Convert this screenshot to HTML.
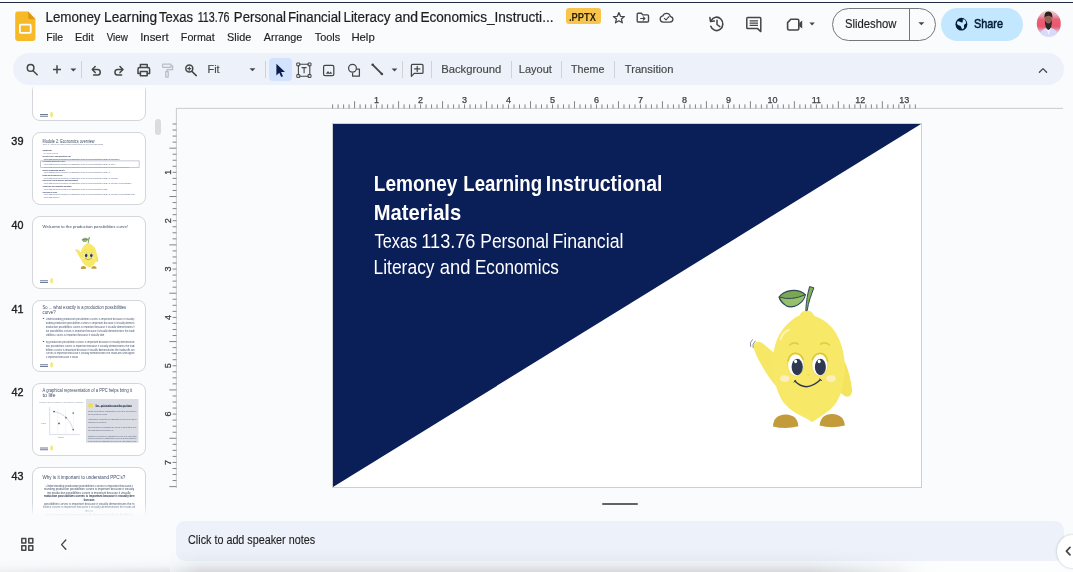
<!DOCTYPE html>
<html>
<head>
<meta charset="utf-8">
<title>Lemoney Learning - Google Slides</title>
<style>
*{box-sizing:border-box;margin:0;padding:0}
html,body{width:1073px;height:572px;overflow:hidden}
body{background:#f9fbfd;font-family:"Liberation Sans",sans-serif;color:#1f1f1f;position:relative}
.abs{position:absolute}
#wrap{position:absolute;left:-12px;top:-12px;width:1097px;height:596px;background:#f9fbfd;filter:blur(0.5px)}
#wrap>*{margin-left:12px;margin-top:12px}
#topline{left:0;top:0;width:1073px;height:3px;background:linear-gradient(to bottom,#fdfdfe 0,#fdfdfe 1.5px,#1d2a40 1.7px,#1d2a40 2.8px,#9db4c9 3px)}
#toolbar{left:13px;top:53.3px;width:1051px;height:32px;border-radius:16px;background:#edf2fa}
.sep{position:absolute;top:61px;width:1px;height:17px;background:#cfd2d7}
#selbtn{left:269px;top:58px;width:23px;height:23px;border-radius:4px;background:#d3e3fd}
#pptx{left:565.6px;top:8.3px;width:35.2px;height:16.2px;border-radius:3px;background:#f8c44c}
#slideshow{left:832px;top:8px;width:104px;height:33px;border:1px solid #747775;border-radius:17px}
#slideshow i{position:absolute;left:76px;top:0;width:1px;height:31px;background:#747775}
#share{left:941px;top:8px;width:81.5px;height:33px;border-radius:17px;background:#c2e7ff}

.thumb{position:absolute;left:32.4px;width:113.4px;height:72.6px;border:1px solid #d3d6da;border-radius:8px;background:#fff;overflow:hidden}
.ti{position:absolute;left:-1px;top:-1px;width:453.6px;height:290.4px;transform:scale(.25);transform-origin:0 0}
.tl{position:absolute;white-space:nowrap;overflow:hidden;line-height:1.15}
.lg{position:absolute;width:60px;height:22px}
.lg b{position:absolute;left:0;top:2px;width:32px;height:4px;background:#6f7c99;display:block}
.lg i{position:absolute;left:41px;top:-7px;width:11px;height:22px;border-radius:50%;background:#f3e873;display:block}

#filmclip{left:0;top:86.5px;width:165px;height:429px;overflow:hidden}
#filmfadeT{left:0;top:86px;width:165px;height:5px;background:linear-gradient(to bottom,rgba(249,251,253,1),rgba(249,251,253,0))}
#filmfade{left:0;top:503px;width:165px;height:13px;background:linear-gradient(to bottom,rgba(249,251,253,0),rgba(249,251,253,1))}
#scrollthumb{left:154.5px;top:119px;width:6px;height:15.5px;border-radius:3px;background:#dadce0}
#slide{left:332px;top:123px;width:590px;height:365px;background:#fff;border:1px solid #cdd0d3;overflow:hidden}
#notes{left:176px;top:520.8px;width:888px;height:40.2px;border-radius:9px;background:#edf2fa}
#handle{left:602px;top:503px;width:36px;height:1.6px;background:#5f6368;border-radius:1px}
#botshade{left:170px;top:550px;width:760px;height:22px;background:linear-gradient(to bottom,rgba(90,95,105,0) 0%,rgba(90,95,105,0.035) 40%,rgba(90,95,105,0.10) 70%,rgba(90,95,105,0.22) 100%);-webkit-mask-image:linear-gradient(to right,rgba(0,0,0,.35) 0,#000 4%,#000 84%,transparent 100%);mask-image:linear-gradient(to right,rgba(0,0,0,.35) 0,#000 4%,#000 84%,transparent 100%)}
#botshadeL{left:0;top:558px;width:170px;height:14px;background:linear-gradient(to right,rgba(249,251,253,.55) 0,rgba(249,251,253,0) 100%),linear-gradient(to bottom,rgba(90,95,105,0) 0%,rgba(90,95,105,0.04) 55%,rgba(90,95,105,0.16) 100%)}
#botwhite{left:900px;top:561px;width:173px;height:11px;background:linear-gradient(to right,rgba(252,253,254,0),rgba(252,253,254,1) 25%)}
#sidebtn{left:1057px;top:534.6px;width:30px;height:33px;border-radius:50%;background:#fff;box-shadow:0 0 2.5px rgba(0,0,0,.26)}
svg text{font-family:"Liberation Sans",sans-serif}
</style>
</head>
<body>
<div id="wrap">
<div id="topline" class="abs"></div>
<div id="toolbar" class="abs"></div>
<div id="selbtn" class="abs"></div>
<div class="sep" style="left:81px"></div>
<div class="sep" style="left:265px"></div>
<div class="sep" style="left:402px"></div>
<div class="sep" style="left:431px"></div>
<div class="sep" style="left:511px"></div>
<div class="sep" style="left:560.5px"></div>
<div class="sep" style="left:614px"></div>
<div id="pptx" class="abs"></div>
<div id="slideshow" class="abs"><i></i></div>
<div id="share" class="abs"></div>

<!-- filmstrip -->
<div id="filmclip" class="abs">
<div class="thumb" style="top:-37.9px;"><div class="ti"><div class="lg" style="left:32.0px;top:257.6px"><b></b><b style="top:9px"></b><i></i></div></div></div>
<div class="thumb" style="top:45.8px;"><div class="ti"><div class="tl" style="left:42.0px;top:25.9px;overflow:visible;transform-origin:0 0;transform:scaleX(0.840);font-size:18.0px;color:#3d4b66;">Module 2: Economics overview</div><div class="tl" style="left:42.0px;top:45.9px;width:242.4px;font-size:8.0px;color:#6b7890;">Topic 1: How do we make choices about how we use our resources? An overview of the production possibilities</div><div class="tl" style="left:42.0px;top:68.0px;overflow:visible;transform-origin:0 0;transform:scaleX(0.913);font-size:9.2px;color:#1d2a4a;font-weight:700;">Contents</div><div class="tl" style="left:45.6px;top:79.5px;overflow:visible;transform-origin:0 0;transform:scaleX(0.489);font-size:8.8px;color:#5a6a8e;">Unit 1: Welcome to economics</div><div class="tl" style="left:42.0px;top:90.4px;overflow:visible;transform-origin:0 0;transform:scaleX(0.682);font-size:9.2px;color:#1d2a4a;font-weight:700;">Scarcity, choice, and opportunity cost</div><div class="tl" style="left:45.6px;top:101.9px;width:304.4px;font-size:8.8px;color:#5a6a8e;text-decoration:underline;">Understanding production possibilities curves is important because it visually demonstrates the trade-offs and opportunity costs of choosing between alternatives and helps individuals, businesses, and policymakers make informed decisions about resource allocation and economic efficiency over time. </div><div class="tl" style="left:42.0px;top:112.0px;overflow:visible;transform-origin:0 0;transform:scaleX(0.697);font-size:9.2px;color:#1d2a4a;font-weight:700;">Production possibilities curve</div><div class="tl" style="left:45.6px;top:123.1px;width:287.2px;font-size:8.8px;color:#5a6a8e;">Understanding production possibilities curves is important because it visually demonstrates the trade-offs and opportunity costs of choosing between alternatives and helps individuals, businesses, and policymakers make informed decisions about resource allocation and economic efficiency over time. </div><div class="tl" style="left:45.6px;top:134.3px;width:342.0px;font-size:8.8px;color:#5a6a8e;text-decoration:underline;">Understanding production possibilities curves is important because it visually demonstrates the trade-offs and opportunity costs of choosing between alternatives and helps individuals, businesses, and policymakers make informed decisions about resource allocation and economic efficiency over time. </div><div class="tl" style="left:42.0px;top:145.6px;overflow:visible;transform-origin:0 0;transform:scaleX(0.699);font-size:9.2px;color:#1d2a4a;font-weight:700;">Supply, demand and markets</div><div class="tl" style="left:45.6px;top:156.7px;width:267.6px;font-size:8.8px;color:#5a6a8e;">Understanding production possibilities curves is important because it visually demonstrates the trade-offs and opportunity costs of choosing between alternatives and helps individuals, businesses, and policymakers make informed decisions about resource allocation and economic efficiency over time. </div><div class="tl" style="left:42.0px;top:167.2px;overflow:visible;transform-origin:0 0;transform:scaleX(0.578);font-size:9.2px;color:#1d2a4a;font-weight:700;">Inflation and the business cycle</div><div class="tl" style="left:45.6px;top:179.1px;width:300.4px;font-size:8.8px;color:#5a6a8e;">Understanding production possibilities curves is important because it visually demonstrates the trade-offs and opportunity costs of choosing between alternatives and helps individuals, businesses, and policymakers make informed decisions about resource allocation and economic efficiency over time. </div><div class="tl" style="left:42.0px;top:189.2px;overflow:visible;transform-origin:0 0;transform:scaleX(0.725);font-size:9.2px;color:#1d2a4a;font-weight:700;">Role of the Federal Reserve and government</div><div class="tl" style="left:45.6px;top:200.3px;width:352.0px;font-size:8.8px;color:#5a6a8e;">Understanding production possibilities curves is important because it visually demonstrates the trade-offs and opportunity costs of choosing between alternatives and helps individuals, businesses, and policymakers make informed decisions about resource allocation and economic efficiency over time. </div><div class="tl" style="left:42.0px;top:211.6px;overflow:visible;transform-origin:0 0;transform:scaleX(0.656);font-size:9.2px;color:#1d2a4a;font-weight:700;">Global trade and comparative advantage</div><div class="tl" style="left:45.6px;top:223.1px;width:256.0px;font-size:8.8px;color:#5a6a8e;">Understanding production possibilities curves is important because it visually demonstrates the trade-offs and opportunity costs of choosing between alternatives and helps individuals, businesses, and policymakers make informed decisions about resource allocation and economic efficiency over time. </div><div class="tl" style="left:42.0px;top:234.0px;overflow:visible;transform-origin:0 0;transform:scaleX(0.751);font-size:9.2px;color:#1d2a4a;font-weight:700;">Checking in: quiz</div><div class="tl" style="left:45.6px;top:245.1px;width:367.2px;font-size:8.8px;color:#5a6a8e;">Understanding production possibilities curves is important because it visually demonstrates the trade-offs and opportunity costs of choosing between alternatives and helps individuals, businesses, and policymakers make informed decisions about resource allocation and economic efficiency over time. </div><div class="tl" style="left:45.6px;top:255.9px;width:64.0px;font-size:8.8px;color:#5a6a8e;">Understanding production possibilities curves is important because it visually demonstrates the trade-offs and opportunity costs of choosing between alternatives and helps individuals, businesses, and policymakers make informed decisions about resource allocation and economic efficiency over time. </div><div style="position:absolute;left:32.8px;top:113.6px;width:397.6px;height:29.6px;border:3px solid #b3b9c5"></div></div></div>
<div class="thumb" style="top:129.7px;"><div class="ti"><div class="tl" style="left:42.0px;top:30.3px;overflow:visible;transform-origin:0 0;transform:scaleX(0.970);font-size:17.4px;color:#3d4b66;">Welcome to the production possibilities curve!</div><svg style="position:absolute;left:168.8px;top:81.6px" width="98.4" height="132.8" viewBox="744 283 110 148" preserveAspectRatio="none"><use href="#lemon"/></svg><div class="lg" style="left:32.0px;top:255.2px"><b></b><b style="top:9px"></b><i></i></div></div></div>
<div class="thumb" style="top:213.3px;"><div class="ti"><div class="tl" style="left:42.0px;top:19.9px;overflow:visible;transform-origin:0 0;transform:scaleX(0.915);font-size:18.0px;color:#3d4b66;">So ... what exactly is a production possibilities</div><div class="tl" style="left:42.0px;top:39.9px;overflow:visible;transform-origin:0 0;transform:scaleX(0.970);font-size:18.0px;color:#3d4b66;">curve?</div><div class="tl" style="left:55.2px;top:70.6px;width:355.2px;font-size:10.4px;color:#46546f;">Understanding production possibilities curves is important because it visually demonstrates the trade-offs and opportunity costs of choosing between alternatives and helps individuals, businesses, and policymakers make informed decisions about resource allocation and economic efficiency over time. Understanding production possibilities curves is important because it visually demonstrates the trade-offs and opportunity costs of choosing between alternatives and helps individuals, businesses, and policymakers make informed decisions about resource allocation and economic efficiency over time. </div><div class="tl" style="left:55.2px;top:85.8px;width:355.2px;font-size:10.4px;color:#46546f;">anding production possibilities curves is important because it visually demonstrates the trade-offs and opportunity costs of choosing between alternatives and helps individuals, businesses, and policymakers make informed decisions about resource allocation and economic efficiency over time. Understanding production possibilities curves is important because it visually demonstrates the trade-offs and opportunity costs of choosing between alternatives and helps individuals, businesses, and policymakers make informed decisions about resource allocation and economic efficiency over time. </div><div class="tl" style="left:55.2px;top:101.0px;width:355.2px;font-size:10.4px;color:#46546f;">production possibilities curves is important because it visually demonstrates the trade-offs and opportunity costs of choosing between alternatives and helps individuals, businesses, and policymakers make informed decisions about resource allocation and economic efficiency over time. Understanding production possibilities curves is important because it visually demonstrates the trade-offs and opportunity costs of choosing between alternatives and helps individuals, businesses, and policymakers make informed decisions about resource allocation and economic efficiency over time. </div><div class="tl" style="left:55.2px;top:116.6px;width:355.2px;font-size:10.4px;color:#46546f;">ion possibilities curves is important because it visually demonstrates the trade-offs and opportunity costs of choosing between alternatives and helps individuals, businesses, and policymakers make informed decisions about resource allocation and economic efficiency over time. Understanding production possibilities curves is important because it visually demonstrates the trade-offs and opportunity costs of choosing between alternatives and helps individuals, businesses, and policymakers make informed decisions about resource allocation and economic efficiency over time. </div><div class="tl" style="left:55.2px;top:132.6px;width:233.2px;font-size:10.4px;color:#46546f;">sibilities curves is important because it visually demonstrates the trade-offs and opportunity costs of choosing between alternatives and helps individuals, businesses, and policymakers make informed decisions about resource allocation and economic efficiency over time. Understanding production possibilities curves is important because it visually demonstrates the trade-offs and opportunity costs of choosing between alternatives and helps individuals, businesses, and policymakers make informed decisions about resource allocation and economic efficiency over time. </div><div class="tl" style="left:55.2px;top:163.0px;width:355.2px;font-size:10.4px;color:#46546f;">ng production possibilities curves is important because it visually demonstrates the trade-offs and opportunity costs of choosing between alternatives and helps individuals, businesses, and policymakers make informed decisions about resource allocation and economic efficiency over time. Understanding production possibilities curves is important because it visually demonstrates the trade-offs and opportunity costs of choosing between alternatives and helps individuals, businesses, and policymakers make informed decisions about resource allocation and economic efficiency over time. </div><div class="tl" style="left:55.2px;top:178.6px;width:355.2px;font-size:10.4px;color:#46546f;">tion possibilities curves is important because it visually demonstrates the trade-offs and opportunity costs of choosing between alternatives and helps individuals, businesses, and policymakers make informed decisions about resource allocation and economic efficiency over time. Understanding production possibilities curves is important because it visually demonstrates the trade-offs and opportunity costs of choosing between alternatives and helps individuals, businesses, and policymakers make informed decisions about resource allocation and economic efficiency over time. </div><div class="tl" style="left:55.2px;top:193.4px;width:355.2px;font-size:10.4px;color:#46546f;">ibilities curves is important because it visually demonstrates the trade-offs and opportunity costs of choosing between alternatives and helps individuals, businesses, and policymakers make informed decisions about resource allocation and economic efficiency over time. Understanding production possibilities curves is important because it visually demonstrates the trade-offs and opportunity costs of choosing between alternatives and helps individuals, businesses, and policymakers make informed decisions about resource allocation and economic efficiency over time. </div><div class="tl" style="left:55.2px;top:208.2px;width:355.2px;font-size:10.4px;color:#46546f;"> curves is important because it visually demonstrates the trade-offs and opportunity costs of choosing between alternatives and helps individuals, businesses, and policymakers make informed decisions about resource allocation and economic efficiency over time. Understanding production possibilities curves is important because it visually demonstrates the trade-offs and opportunity costs of choosing between alternatives and helps individuals, businesses, and policymakers make informed decisions about resource allocation and economic efficiency over time. </div><div class="tl" style="left:55.2px;top:224.2px;width:128.4px;font-size:10.4px;color:#46546f;">s important because it visually demonstrates the trade-offs and opportunity costs of choosing between alternatives and helps individuals, businesses, and policymakers make informed decisions about resource allocation and economic efficiency over time. Understanding production possibilities curves is important because it visually demonstrates the trade-offs and opportunity costs of choosing between alternatives and helps individuals, businesses, and policymakers make informed decisions about resource allocation and economic efficiency over time. </div><div class="tl" style="left:42.0px;top:70.6px;overflow:visible;transform-origin:0 0;transform:scaleX(2.307);font-size:10.4px;color:#2d3a58;">•</div><div class="tl" style="left:42.0px;top:163.0px;overflow:visible;transform-origin:0 0;transform:scaleX(2.307);font-size:10.4px;color:#2d3a58;">•</div><div class="lg" style="left:32.0px;top:255.2px"><b></b><b style="top:9px"></b><i></i></div></div></div>
<div class="thumb" style="top:296.8px;"><div class="ti"><div class="tl" style="left:42.0px;top:19.9px;overflow:visible;transform-origin:0 0;transform:scaleX(0.910);font-size:18.0px;color:#3d4b66;">A graphical representation of a PPC helps bring it</div><div class="tl" style="left:42.0px;top:41.1px;overflow:visible;transform-origin:0 0;transform:scaleX(1.218);font-size:18.0px;color:#3d4b66;">to life</div><div class="tl" style="left:30.4px;top:74.1px;overflow:visible;transform-origin:0 0;transform:scaleX(0.918);font-size:7.6px;color:#8590a5;">Example PPC for cupcakes (x) and cookies (y) produced</div><div style="position:absolute;left:215.6px;top:64.0px;width:210.4px;height:175.2px;background:#dadde3"></div><div style="position:absolute;left:224.8px;top:81.2px;width:18.4px;height:16.8px;background:#f1dc4a;border-radius:6px"></div><div class="tl" style="left:254.4px;top:84.6px;overflow:visible;transform-origin:0 0;transform:scaleX(0.724);font-size:10.4px;color:#1d2a4a;font-weight:700;text-decoration:underline;">See... point matters more than you know</div><div class="tl" style="left:223.2px;top:106.7px;width:195.2px;font-size:8.8px;color:#5a6580;">nding production possibilities curves is important because it visually demonstrates the trade-offs and opportunity costs of choosing between alternatives and helps individuals, businesses, and policymakers make informed decisions about resource allocation and economic efficiency over time. </div><div class="tl" style="left:223.2px;top:117.9px;width:76.8px;font-size:8.8px;color:#5a6580;">ng production possibilities curves is important because it visually demonstrates the trade-offs and opportunity costs of choosing between alternatives and helps individuals, businesses, and policymakers make informed decisions about resource allocation and economic efficiency over time. </div><div class="tl" style="left:223.2px;top:139.5px;width:195.2px;font-size:8.8px;color:#5a6580;">erstanding production possibilities curves is important because it visually demonstrates the trade-offs and opportunity costs of choosing between alternatives and helps individuals, businesses, and policymakers make informed decisions about resource allocation and economic efficiency over time. </div><div class="tl" style="left:223.2px;top:151.1px;width:75.2px;font-size:8.8px;color:#5a6580;">tanding production possibilities curves is important because it visually demonstrates the trade-offs and opportunity costs of choosing between alternatives and helps individuals, businesses, and policymakers make informed decisions about resource allocation and economic efficiency over time. </div><div class="tl" style="left:223.2px;top:172.3px;width:195.2px;font-size:8.8px;color:#5a6580;">ng production possibilities curves is important because it visually demonstrates the trade-offs and opportunity costs of choosing between alternatives and helps individuals, businesses, and policymakers make informed decisions about resource allocation and economic efficiency over time. </div><div class="tl" style="left:223.2px;top:183.9px;width:102.8px;font-size:8.8px;color:#5a6580;">nderstanding production possibilities curves is important because it visually demonstrates the trade-offs and opportunity costs of choosing between alternatives and helps individuals, businesses, and policymakers make informed decisions about resource allocation and economic efficiency over time. </div><div class="tl" style="left:223.2px;top:205.5px;width:195.2px;font-size:8.8px;color:#5a6580;">tanding production possibilities curves is important because it visually demonstrates the trade-offs and opportunity costs of choosing between alternatives and helps individuals, businesses, and policymakers make informed decisions about resource allocation and economic efficiency over time. </div><div class="tl" style="left:223.2px;top:217.1px;width:195.2px;font-size:8.8px;color:#5a6580;">ding production possibilities curves is important because it visually demonstrates the trade-offs and opportunity costs of choosing between alternatives and helps individuals, businesses, and policymakers make informed decisions about resource allocation and economic efficiency over time. </div><div class="tl" style="left:223.2px;top:228.3px;width:195.2px;font-size:8.8px;color:#5a6580;">g production possibilities curves is important because it visually demonstrates the trade-offs and opportunity costs of choosing between alternatives and helps individuals, businesses, and policymakers make informed decisions about resource allocation and economic efficiency over time. </div><svg style="position:absolute;left:0;top:0" width="454" height="290"><path d="M70.8,95.6 L70.8,206.4 L191.2,206.4" fill="none" stroke="#b9c0cc" stroke-width="2"/><path d="M88.0,114.0 Q146.4,124.8 165.2,186.4" fill="none" stroke="#aab2c2" stroke-width="2"/><circle cx="88.0" cy="114.0" r="3.4" fill="#3d4b66"/><circle cx="165.2" cy="120.0" r="3.4" fill="#3d4b66"/><circle cx="135.6" cy="138.8" r="3.4" fill="#3d4b66"/><circle cx="108.0" cy="161.6" r="3.4" fill="#3d4b66"/><circle cx="165.2" cy="186.4" r="3.4" fill="#3d4b66"/><path d="M102.4,102.8 V206.4" stroke="#e3e6ec" stroke-width="1.5"/><path d="M134.4,102.8 V206.4" stroke="#e3e6ec" stroke-width="1.5"/><path d="M166.4,102.8 V206.4" stroke="#e3e6ec" stroke-width="1.5"/></svg><div class="tl" style="left:36.8px;top:157.3px;overflow:visible;transform-origin:0 0;transform:scaleX(0.670);font-size:7.6px;color:#6b7890;">Cookies</div><div class="tl" style="left:104.0px;top:214.9px;overflow:visible;transform-origin:0 0;transform:scaleX(0.663);font-size:7.6px;color:#6b7890;">Cupcakes</div><div class="lg" style="left:32.0px;top:256.4px"><b></b><b style="top:9px"></b><i></i></div></div></div>
<div class="thumb" style="top:380.5px;"><div class="ti"><div class="tl" style="left:42.0px;top:30.3px;overflow:visible;transform-origin:0 0;transform:scaleX(1.010);font-size:18.0px;color:#3d4b66;">Why is it important to understand PPC's?</div><div class="tl" style="left:54.4px;top:69.9px;width:350.0px;font-size:11.6px;color:#3f4d68;text-align:center;">Understanding production possibilities curves is important because it visually demonstrates the trade-offs and opportunity costs of choosing between alternatives and helps individuals, businesses, and policymakers make informed decisions about resource allocation and economic efficiency over time. Understanding production possibilities curves is important because it visually demonstrates the trade-offs and opportunity costs of choosing between alternatives and helps individuals, businesses, and policymakers make informed decisions about resource allocation and economic efficiency over time. </div><div class="tl" style="left:47.6px;top:82.3px;width:362.8px;font-size:11.6px;color:#3f4d68;text-align:center;">standing production possibilities curves is important because it visually demonstrates the trade-offs and opportunity costs of choosing between alternatives and helps individuals, businesses, and policymakers make informed decisions about resource allocation and economic efficiency over time. Understanding production possibilities curves is important because it visually demonstrates the trade-offs and opportunity costs of choosing between alternatives and helps individuals, businesses, and policymakers make informed decisions about resource allocation and economic efficiency over time. </div><div class="tl" style="left:60.4px;top:95.5px;width:336.0px;font-size:11.6px;color:#3f4d68;text-align:center;">ing production possibilities curves is important because it visually demonstrates the trade-offs and opportunity costs of choosing between alternatives and helps individuals, businesses, and policymakers make informed decisions about resource allocation and economic efficiency over time. Understanding production possibilities curves is important because it visually demonstrates the trade-offs and opportunity costs of choosing between alternatives and helps individuals, businesses, and policymakers make informed decisions about resource allocation and economic efficiency over time. </div><div class="tl" style="left:47.6px;top:109.5px;width:362.8px;font-size:11.6px;color:#1d2a4a;font-weight:700;text-align:center;">roduction possibilities curves is important because it visually demonstrates the trade-offs and opportunity costs of choosing between alternatives and helps individuals, businesses, and policymakers make informed decisions about resource allocation and economic efficiency over time. Understanding production possibilities curves is important because it visually demonstrates the trade-offs and opportunity costs of choosing between alternatives and helps individuals, businesses, and policymakers make informed decisions about resource allocation and economic efficiency over time. </div><div class="tl" style="left:205.6px;top:122.7px;width:45.6px;font-size:11.6px;color:#1d2a4a;font-weight:700;text-align:center;">tion possibilities curves is important because it visually demonstrates the trade-offs and opportunity costs of choosing between alternatives and helps individuals, businesses, and policymakers make informed decisions about resource allocation and economic efficiency over time. Understanding production possibilities curves is important because it visually demonstrates the trade-offs and opportunity costs of choosing between alternatives and helps individuals, businesses, and policymakers make informed decisions about resource allocation and economic efficiency over time. </div><div class="tl" style="left:47.6px;top:141.1px;width:362.8px;font-size:11.6px;color:#3f4d68;text-align:center;">possibilities curves is important because it visually demonstrates the trade-offs and opportunity costs of choosing between alternatives and helps individuals, businesses, and policymakers make informed decisions about resource allocation and economic efficiency over time. Understanding production possibilities curves is important because it visually demonstrates the trade-offs and opportunity costs of choosing between alternatives and helps individuals, businesses, and policymakers make informed decisions about resource allocation and economic efficiency over time. </div><div class="tl" style="left:44.4px;top:153.5px;width:368.0px;font-size:11.6px;color:#3f4d68;text-align:center;">bilities curves is important because it visually demonstrates the trade-offs and opportunity costs of choosing between alternatives and helps individuals, businesses, and policymakers make informed decisions about resource allocation and economic efficiency over time. Understanding production possibilities curves is important because it visually demonstrates the trade-offs and opportunity costs of choosing between alternatives and helps individuals, businesses, and policymakers make informed decisions about resource allocation and economic efficiency over time. </div><div class="tl" style="left:212.4px;top:167.1px;width:32.0px;font-size:11.6px;color:#3f4d68;text-align:center;">ies curves is important because it visually demonstrates the trade-offs and opportunity costs of choosing between alternatives and helps individuals, businesses, and policymakers make informed decisions about resource allocation and economic efficiency over time. Understanding production possibilities curves is important because it visually demonstrates the trade-offs and opportunity costs of choosing between alternatives and helps individuals, businesses, and policymakers make informed decisions about resource allocation and economic efficiency over time. </div><div class="tl" style="left:52.4px;top:182.7px;width:350.0px;font-size:11.6px;color:#3f4d68;text-align:center;">urves is important because it visually demonstrates the trade-offs and opportunity costs of choosing between alternatives and helps individuals, businesses, and policymakers make informed decisions about resource allocation and economic efficiency over time. Understanding production possibilities curves is important because it visually demonstrates the trade-offs and opportunity costs of choosing between alternatives and helps individuals, businesses, and policymakers make informed decisions about resource allocation and economic efficiency over time. </div></div></div>
</div>
<div id="filmfade" class="abs"></div>
<div id="filmfadeT" class="abs"></div>
<div id="scrollthumb" class="abs"></div>

<!-- slide canvas -->
<div id="slide" class="abs">
  <svg width="588" height="363" viewBox="0 0 588 363" style="position:absolute;left:0;top:0">
    <polygon points="0,0 588,0 0,363" fill="#0a1e57"/>
  </svg>
</div>
<div id="handle" class="abs"></div>
<div id="notes" class="abs"></div>
<div id="botshade" class="abs"></div>
<div id="botshadeL" class="abs"></div>
<div id="botwhite" class="abs"></div>
<div id="sidebtn" class="abs"></div>

<!-- overlay: icons, text, rulers, mascot -->
<svg class="abs" style="left:0;top:0;will-change:transform" width="1073" height="572" viewBox="0 0 1073 572">
<g id="logo">
  <path d="M17.6 11.6 H28.2 L35.4 19.3 V38.6 Q35.4 41 33 41 H17.6 Q15.2 41 15.2 38.6 V14 Q15.2 11.6 17.6 11.6Z" fill="#f6b927"/>
  <path d="M28.2 11.6 L35.4 19.3 H30.2 Q28.2 19.3 28.2 17.3Z" fill="#e0980f"/>
  <rect x="19.9" y="24.6" width="10.8" height="8.2" rx="0.7" fill="none" stroke="#fff" stroke-width="1.8"/>
</g>
<g fill="none" stroke="#444746" stroke-width="1.5" stroke-linecap="round" stroke-linejoin="round">
  <!-- search -->
  <circle cx="30.6" cy="67.9" r="3.3"/>
  <path d="M33 70.7 L37.2 74.8"/>
  <!-- plus -->
  <path d="M53 69.4 H61 M57 65.3 V73.5" stroke-width="1.5" stroke-linecap="butt"/>
  <!-- undo -->
  <path d="M92.6 69.6 H97.6 A2.65 2.75 0 0 1 97.6 75.1 H93.6"/>
  <path d="M95.2 66.6 L92.3 69.6 L95.2 72.6"/>
  <!-- redo -->
  <path d="M122.6 69.6 H117.6 A2.65 2.75 0 0 0 117.6 75.1 H121.6"/>
  <path d="M120 66.6 L122.9 69.6 L120 72.6"/>
  <!-- print -->
  <path d="M140.4 67.6 V64.6 H147.2 V67.6" />
  <path d="M140.4 73.6 H138 V69.2 Q138 67.6 139.6 67.6 H148 Q149.6 67.6 149.6 69.2 V73.6 H147.2"/>
  <rect x="140.4" y="71.4" width="6.8" height="4.3"/>
  <!-- zoom -->
  <circle cx="189.3" cy="68.6" r="3.5"/>
  <path d="M191.9 71.4 L196.3 75.6"/>
  <path d="M187.7 68.6 H190.9 M189.3 67 V70.2" stroke-width="1.1"/>
  <!-- text box -->
  <path d="M299.6 64.2 H308.6 M299.6 76.2 H308.6 M298.4 65.6 V74.8 M309.8 65.6 V74.8" stroke-width="1.1"/>
  <rect x="297.2" y="63" width="2.6" height="2.8" stroke-width="1"/>
  <rect x="308.4" y="63" width="2.6" height="2.8" stroke-width="1"/>
  <rect x="297.2" y="74.6" width="2.6" height="2.8" stroke-width="1"/>
  <rect x="308.4" y="74.6" width="2.6" height="2.8" stroke-width="1"/>
  <path d="M302 67.6 H306.2 M304.1 67.6 V72.8" stroke-width="1.1"/>
  <!-- image -->
  <rect x="323.6" y="65.4" width="10.2" height="10.2" rx="1.4" stroke-width="1.25"/>
  <!-- shapes -->
  <circle cx="352.5" cy="68.2" r="3.9" stroke-width="1.25"/>
  <path d="M357.2 69.2 H359.4 V76.2 H352.6 V73.4" stroke-width="1.25"/>
  <!-- line -->
  <path d="M372.8 64.9 L381.8 73.9" stroke-width="1.9"/>
  <!-- comment plus -->
  <path d="M411.4 76.4 V65.4 Q411.4 64.4 412.4 64.4 H422 Q423 64.4 423 65.4 V72.4 Q423 73.4 422 73.4 H414.2 Z" stroke-width="1.25"/>
  <path d="M414.6 68.9 H419.8 M417.2 66.3 V71.5" stroke-width="1.2"/>
  <!-- star -->
  <path d="M618.9 12.6 L620.5 16.3 L624.4 16.6 L621.4 19.1 L622.3 22.8 L618.9 20.8 L615.5 22.8 L616.4 19.1 L613.4 16.6 L617.3 16.3Z" stroke-width="1.3"/>
  <!-- folder move -->
  <path d="M637.2 14.6 Q637.2 13.7 638.1 13.7 H641.4 L642.8 15.4 H647.6 Q648.5 15.4 648.5 16.3 V21.6 Q648.5 22.5 647.6 22.5 H638.1 Q637.2 22.5 637.2 21.6Z" stroke-width="1.35" transform="translate(0 -0.5)"/>
  <path d="M640.6 18.5 H644.8 M643.2 16.8 L644.9 18.5 L643.2 20.2" stroke-width="1.1"/>
  <!-- cloud done -->
  <path d="M663.2 22.4 H669.8 Q672.9 22.4 672.9 19.6 Q672.9 17.2 670.4 16.9 Q669.8 13.6 666.4 13.6 Q663.8 13.6 662.8 16.2 Q660.2 16.5 660.2 19.4 Q660.2 22.4 663.2 22.4Z" stroke-width="1.3" transform="translate(0 -0.3)"/>
  <path d="M664.4 18.3 L666 19.9 L669 16.6" stroke-width="1.1"/>
  <!-- history -->
  <path d="M711.2 20.6 A6.2 6.7 0 1 1 710.8 26.2" stroke-width="1.6"/>
  <path d="M709.9 17.6 L710.5 21.6 L714.4 21" stroke-width="1.5"/>
  <path d="M717 20.2 V24.5 L719.8 26.6" stroke-width="1.5"/>
  <!-- comments -->
  <path d="M746.8 18.4 Q746.8 17.6 747.6 17.6 H760 Q760.8 17.6 760.8 18.4 V31.6 L757.6 28.6 H747.6 Q746.8 28.6 746.8 27.8Z" stroke-width="1.5"/>
  <path d="M749.6 20.8 H758 M749.6 23.1 H758 M749.6 25.4 H758" stroke-width="1.15" stroke-linecap="butt"/>
  <!-- camera -->
  <path d="M787.6 22.6 L790.8 19.2 H797.4 Q798.8 19.2,798.8 20.6 V28.6 Q798.8 30,797.4 30 H789 Q787.6 30,787.6 28.6Z" stroke-width="1.6"/>
  <!-- chevron up -->
  <path d="M1039.4 72.2 L1043 68.6 L1046.6 72.2" stroke-width="1.3"/>
  <!-- filmstrip chevron -->
  <path d="M65.8 540 L61.6 544.6 L65.8 549.2" stroke-width="1.4"/>
  <!-- side chevron -->
  <path d="M1070 547.4 L1066.4 551.1 L1070 554.8" stroke-width="1.7"/>
  <!-- grid -->
  <rect x="21.8" y="538.6" width="4" height="4.4" stroke-width="1.5"/>
  <rect x="28.8" y="538.6" width="4" height="4.4" stroke-width="1.5"/>
  <rect x="21.8" y="545.8" width="4" height="4.4" stroke-width="1.5"/>
  <rect x="28.8" y="545.8" width="4" height="4.4" stroke-width="1.5"/>
</g>
<g fill="#444746">
  <!-- dropdown triangles -->
  <path d="M70.4 68.5 H76.4 L73.4 71.6Z"/>
  <path d="M249.5 68.2 H255.4 L252.45 71.3Z"/>
  <path d="M391.6 68.4 H397.4 L394.5 71.4Z"/>
  <path d="M809.4 22.6 H814.8 L812.1 25.4Z"/>
  <path d="M918.4 22.2 H924.4 L921.4 25.3Z"/>
  <!-- print dot / image mountain / line dots -->
  <path d="M325.8 73.8 L328 70.9 L329.6 72.9 L330.7 71.6 L332.2 73.8Z"/>
  <circle cx="372.7" cy="64.8" r="1.3"/><circle cx="381.9" cy="74" r="1.3"/>
  <!-- camera lens -->
  <path d="M799.2 23 L802.2 20.6 V28.6 L799.2 26.2Z"/>
</g>
<!-- paint format (disabled) -->
<g fill="none" stroke="#b9bcc2" stroke-width="1.25" stroke-linejoin="round">
  <rect x="162.6" y="64.2" width="8.4" height="3.2" rx="0.6"/>
  <path d="M171 65.8 H172.6 V69.6 H167 V71.6"/>
  <rect x="165.8" y="71.6" width="2.4" height="5.4"/>
</g>
<!-- cursor -->
<path d="M276.4 63.8 V75.4 L279.3 72.7 L281.2 77 L283 76.2 L281.1 72 H285Z" fill="#0b1c4a"/>
<!-- globe -->
<g>
  <ellipse cx="961.4" cy="24.2" rx="5.9" ry="6.4" fill="#001d35"/>
  <path d="M957.2 21.6 Q958.8 20.6 960.2 21.8 Q961 22.6 962.4 22.4 Q963.2 21.2 962.6 19.6 L964.6 19.4 Q966 21 966.2 23.2 L964.4 24.6 Q963.4 26 964.2 27.8 L962.8 29.2 Q961.4 28.8 961.2 27.2 Q960.8 25.8 959.4 25.6 Q957.6 25.4 957 23.8Z" fill="#c2e7ff"/>
</g>
<!-- avatar -->
<g>
  <clipPath id="avc"><ellipse cx="1048.8" cy="23.7" rx="12" ry="13.1"/></clipPath>
  <linearGradient id="avg" x1="0" y1="0" x2="0" y2="1">
    <stop offset="0" stop-color="#e6d6d8"/><stop offset=".2" stop-color="#e7a3ad"/><stop offset=".34" stop-color="#ea5f76"/>
    <stop offset=".6" stop-color="#e9586f"/><stop offset=".72" stop-color="#dfa0b4"/><stop offset=".82" stop-color="#d3d8f8"/><stop offset="1" stop-color="#e4e7fb"/>
  </linearGradient>
  <g clip-path="url(#avc)">
    <rect x="1036" y="10" width="26" height="28" fill="url(#avg)"/>
    <path d="M1039 38 Q1040.4 29.6,1045.8 28 L1051.4 28 Q1057.6 29.6,1059 38Z" fill="#d6dbfa"/>
    <path d="M1046.4 28 L1048.6 35 L1050.8 28Z" fill="#f3f4fd"/>
    <ellipse cx="1048.4" cy="19.6" rx="3.5" ry="4.2" fill="#8f6455"/>
    <path d="M1044.4 18.6 Q1043.8 11.6,1048.4 11.6 Q1053 11.6,1052.4 18.6 Q1051.4 15.8,1048.4 15.8 Q1045.4 15.8,1044.4 18.6Z" fill="#2a2023"/>
    <path d="M1044.8 20.6 Q1045 29.4,1048.4 30 Q1051.8 29.4,1052 20.6 Q1050.8 23.4,1048.4 23.4 Q1046 23.4,1044.8 20.6Z" fill="#30262a"/>
  </g>
</g>

<path d="M176 108.4 H1063" stroke="#c9ccd1" stroke-width="1" fill="none"/>
<path d="M332.60 104.40V108.40M338.10 104.40V108.40M343.60 104.40V108.40M349.09 104.40V108.40M354.59 101.20V108.40M360.09 104.40V108.40M365.59 104.40V108.40M371.08 104.40V108.40M376.58 104.40V108.40M382.08 104.40V108.40M387.58 104.40V108.40M393.07 104.40V108.40M398.57 101.20V108.40M404.07 104.40V108.40M409.56 104.40V108.40M415.06 104.40V108.40M420.56 104.40V108.40M426.06 104.40V108.40M431.56 104.40V108.40M437.05 104.40V108.40M442.55 101.20V108.40M448.05 104.40V108.40M453.55 104.40V108.40M459.04 104.40V108.40M464.54 104.40V108.40M470.04 104.40V108.40M475.54 104.40V108.40M481.03 104.40V108.40M486.53 101.20V108.40M492.03 104.40V108.40M497.52 104.40V108.40M503.02 104.40V108.40M508.52 104.40V108.40M514.02 104.40V108.40M519.51 104.40V108.40M525.01 104.40V108.40M530.51 101.20V108.40M536.01 104.40V108.40M541.50 104.40V108.40M547.00 104.40V108.40M552.50 104.40V108.40M558.00 104.40V108.40M563.50 104.40V108.40M568.99 104.40V108.40M574.49 101.20V108.40M579.99 104.40V108.40M585.49 104.40V108.40M590.98 104.40V108.40M596.48 104.40V108.40M601.98 104.40V108.40M607.48 104.40V108.40M612.97 104.40V108.40M618.47 101.20V108.40M623.97 104.40V108.40M629.46 104.40V108.40M634.96 104.40V108.40M640.46 104.40V108.40M645.96 104.40V108.40M651.45 104.40V108.40M656.95 104.40V108.40M662.45 101.20V108.40M667.95 104.40V108.40M673.44 104.40V108.40M678.94 104.40V108.40M684.44 104.40V108.40M689.94 104.40V108.40M695.43 104.40V108.40M700.93 104.40V108.40M706.43 101.20V108.40M711.93 104.40V108.40M717.42 104.40V108.40M722.92 104.40V108.40M728.42 104.40V108.40M733.92 104.40V108.40M739.41 104.40V108.40M744.91 104.40V108.40M750.41 101.20V108.40M755.91 104.40V108.40M761.40 104.40V108.40M766.90 104.40V108.40M772.40 104.40V108.40M777.90 104.40V108.40M783.39 104.40V108.40M788.89 104.40V108.40M794.39 101.20V108.40M799.89 104.40V108.40M805.38 104.40V108.40M810.88 104.40V108.40M816.38 104.40V108.40M821.88 104.40V108.40M827.38 104.40V108.40M832.87 104.40V108.40M838.37 101.20V108.40M843.87 104.40V108.40M849.37 104.40V108.40M854.86 104.40V108.40M860.36 104.40V108.40M865.86 104.40V108.40M871.36 104.40V108.40M876.85 104.40V108.40M882.35 101.20V108.40M887.85 104.40V108.40M893.35 104.40V108.40M898.84 104.40V108.40M904.34 104.40V108.40M909.84 104.40V108.40M915.34 104.40V108.40" stroke="#6b7075" stroke-width="0.85" fill="none"/>
<text x="376.58" y="102.9" font-size="9" text-anchor="middle" fill="#3c4043" stroke="#3c4043" stroke-width="0.25" font-family="Liberation Mono">1</text>
<text x="420.56" y="102.9" font-size="9" text-anchor="middle" fill="#3c4043" stroke="#3c4043" stroke-width="0.25" font-family="Liberation Mono">2</text>
<text x="464.54" y="102.9" font-size="9" text-anchor="middle" fill="#3c4043" stroke="#3c4043" stroke-width="0.25" font-family="Liberation Mono">3</text>
<text x="508.52" y="102.9" font-size="9" text-anchor="middle" fill="#3c4043" stroke="#3c4043" stroke-width="0.25" font-family="Liberation Mono">4</text>
<text x="552.50" y="102.9" font-size="9" text-anchor="middle" fill="#3c4043" stroke="#3c4043" stroke-width="0.25" font-family="Liberation Mono">5</text>
<text x="596.48" y="102.9" font-size="9" text-anchor="middle" fill="#3c4043" stroke="#3c4043" stroke-width="0.25" font-family="Liberation Mono">6</text>
<text x="640.46" y="102.9" font-size="9" text-anchor="middle" fill="#3c4043" stroke="#3c4043" stroke-width="0.25" font-family="Liberation Mono">7</text>
<text x="684.44" y="102.9" font-size="9" text-anchor="middle" fill="#3c4043" stroke="#3c4043" stroke-width="0.25" font-family="Liberation Mono">8</text>
<text x="728.42" y="102.9" font-size="9" text-anchor="middle" fill="#3c4043" stroke="#3c4043" stroke-width="0.25" font-family="Liberation Mono">9</text>
<text x="772.40" y="102.9" font-size="9" text-anchor="middle" fill="#3c4043" stroke="#3c4043" stroke-width="0.25" font-family="Liberation Mono">10</text>
<text x="816.38" y="102.9" font-size="9" text-anchor="middle" fill="#3c4043" stroke="#3c4043" stroke-width="0.25" font-family="Liberation Mono">11</text>
<text x="860.36" y="102.9" font-size="9" text-anchor="middle" fill="#3c4043" stroke="#3c4043" stroke-width="0.25" font-family="Liberation Mono">12</text>
<text x="904.34" y="102.9" font-size="9" text-anchor="middle" fill="#3c4043" stroke="#3c4043" stroke-width="0.25" font-family="Liberation Mono">13</text>
<path d="M176.4 108 V488" stroke="#c9ccd1" stroke-width="1" fill="none"/>
<path d="M172.60 124.00H176.40M172.60 130.04H176.40M172.60 136.09H176.40M172.60 142.13H176.40M169.40 148.18H176.40M172.60 154.22H176.40M172.60 160.26H176.40M172.60 166.31H176.40M172.60 172.35H176.40M172.60 178.39H176.40M172.60 184.44H176.40M172.60 190.48H176.40M169.40 196.53H176.40M172.60 202.57H176.40M172.60 208.61H176.40M172.60 214.66H176.40M172.60 220.70H176.40M172.60 226.74H176.40M172.60 232.79H176.40M172.60 238.83H176.40M169.40 244.88H176.40M172.60 250.92H176.40M172.60 256.96H176.40M172.60 263.01H176.40M172.60 269.05H176.40M172.60 275.09H176.40M172.60 281.14H176.40M172.60 287.18H176.40M169.40 293.23H176.40M172.60 299.27H176.40M172.60 305.31H176.40M172.60 311.36H176.40M172.60 317.40H176.40M172.60 323.44H176.40M172.60 329.49H176.40M172.60 335.53H176.40M169.40 341.58H176.40M172.60 347.62H176.40M172.60 353.66H176.40M172.60 359.71H176.40M172.60 365.75H176.40M172.60 371.79H176.40M172.60 377.84H176.40M172.60 383.88H176.40M169.40 389.93H176.40M172.60 395.97H176.40M172.60 402.01H176.40M172.60 408.06H176.40M172.60 414.10H176.40M172.60 420.14H176.40M172.60 426.19H176.40M172.60 432.23H176.40M169.40 438.28H176.40M172.60 444.32H176.40M172.60 450.36H176.40M172.60 456.41H176.40M172.60 462.45H176.40M172.60 468.49H176.40M172.60 474.54H176.40M172.60 480.58H176.40M169.40 486.62H176.40" stroke="#6b7075" stroke-width="0.85" fill="none"/>
<text transform="translate(170.9 172.35) rotate(-90)" font-size="9" text-anchor="middle" fill="#3c4043" stroke="#3c4043" stroke-width="0.25" font-family="Liberation Mono">1</text>
<text transform="translate(170.9 220.70) rotate(-90)" font-size="9" text-anchor="middle" fill="#3c4043" stroke="#3c4043" stroke-width="0.25" font-family="Liberation Mono">2</text>
<text transform="translate(170.9 269.05) rotate(-90)" font-size="9" text-anchor="middle" fill="#3c4043" stroke="#3c4043" stroke-width="0.25" font-family="Liberation Mono">3</text>
<text transform="translate(170.9 317.40) rotate(-90)" font-size="9" text-anchor="middle" fill="#3c4043" stroke="#3c4043" stroke-width="0.25" font-family="Liberation Mono">4</text>
<text transform="translate(170.9 365.75) rotate(-90)" font-size="9" text-anchor="middle" fill="#3c4043" stroke="#3c4043" stroke-width="0.25" font-family="Liberation Mono">5</text>
<text transform="translate(170.9 414.10) rotate(-90)" font-size="9" text-anchor="middle" fill="#3c4043" stroke="#3c4043" stroke-width="0.25" font-family="Liberation Mono">6</text>
<text transform="translate(170.9 462.45) rotate(-90)" font-size="9" text-anchor="middle" fill="#3c4043" stroke="#3c4043" stroke-width="0.25" font-family="Liberation Mono">7</text>
<g id="lemon">
  <!-- feet -->
  <path d="M773 426.4 Q773.4 415 785.6 414.6 Q797.6 415 798.4 426.2 Q785.8 429.6 773 426.4Z" fill="#c49b3a"/>
  <path d="M819.6 425.6 Q820.4 414.4 832.2 414 Q844.2 414.6 844.8 425.4 Q832.2 428.8 819.6 425.6Z" fill="#c49b3a"/>
  <!-- arms -->
  <path d="M775 354 C771 350,766 346,763 343.4 C759 340.2,753 341.6,753.4 346.6 C754.4 352.6,760 363,766 372.6 C770 379.4,774 384.6,779 389 L783 368Z" fill="#f6e766"/>
  <path d="M840 356 C846 361,849.4 372,851.8 387.6 C853 396,848.4 398.2,844.6 396 C841 393.4,838.6 391,836.6 388Z" fill="#f4e35c"/>
  <!-- body -->
  <path d="M806.6 310.2 C810 310.2,813 312.4,814.6 316 C823 318.6,832.5 326,837 335 C842 344,845 356,844.8 368 C844.6 382,842 394,836 403 C831 410.5,822 415.5,815.6 419.8 Q812.6 423.4,809.6 420.4 C801 416,790 411,783.6 402.6 C777 393.6,772.6 377,772.8 362 C773 350,776 340,780.6 332.6 C785 325.6,792 318.6,799.4 315.4 C801 312.4,803.6 310.2,806.6 310.2Z" fill="#f7e868"/>
  <!-- highlight -->
  <path d="M780.4 339.4 Q782.6 332.6,789 329.6" fill="none" stroke="#fcf5b4" stroke-width="1.8" stroke-linecap="round"/>
  <!-- stem + leaf -->
  <path d="M809.6 286.6 L813.9 287.8 C811.2 295,808.4 302,807.2 310.6 L805.8 310.6 C806.2 301,807.6 294,809.6 286.6Z" fill="#86ad57" stroke="#2f4a5e" stroke-width="1" stroke-linejoin="round"/>
  <path d="M779 297 C784 290.2,797 287.4,805.4 294.6 C803.6 302.8,793.6 309.6,786 305.6 C782.4 303.4,780 300.4,779 297Z" fill="#7ca64f" stroke="#2f4a5e" stroke-width="1.2" stroke-linejoin="round"/>
  <path d="M780.6 297.6 Q791 301,804.8 295.2 C803 302.6,793.4 308.6,786.2 304.9 Q782.8 302.6,780.6 297.6Z" fill="#97bf6c"/>
  <path d="M779.4 297 Q791 301,805.2 294.8" fill="none" stroke="#2f4a5e" stroke-width="1"/>
  <!-- motion lines -->
  <path d="M750.6 346.6 Q749 342.6,752.4 339.6 M753 347.6 Q751.8 344,755.2 341" fill="none" stroke="#6a7386" stroke-width="0.8" stroke-linecap="round"/>
  <!-- eyebrows -->
  <path d="M789.6 345 Q794 341.2,798.4 344.2" fill="none" stroke="#e3cd44" stroke-width="1.5" stroke-linecap="round"/>
  <path d="M820.4 344.2 Q825 341.2,829.6 345" fill="none" stroke="#e3cd44" stroke-width="1.5" stroke-linecap="round"/>
  <!-- eye sockets shadow -->
  <ellipse cx="795.8" cy="364.4" rx="8.8" ry="11.8" fill="#f2df57"/>
  <ellipse cx="819.8" cy="364.4" rx="8.6" ry="11.8" fill="#f2df57"/>
  <!-- eyes -->
  <ellipse cx="795.8" cy="365" rx="7.7" ry="10.7" fill="#fff"/>
  <ellipse cx="819.8" cy="365" rx="7.5" ry="10.7" fill="#fff"/>
  <ellipse cx="797.2" cy="367" rx="5.6" ry="8.3" fill="#2f3853"/>
  <ellipse cx="820.4" cy="367" rx="5.5" ry="8.3" fill="#2f3853"/>
  <ellipse cx="795.6" cy="361.4" rx="1.5" ry="1.8" fill="#fff"/>
  <ellipse cx="819.2" cy="361.4" rx="1.5" ry="1.8" fill="#fff"/>
  <path d="M788 361 Q790 352.6,796.4 353.4 Q801.4 354,803.2 359.6" fill="none" stroke="#dcc63e" stroke-width="1.5" stroke-linecap="round"/>
  <path d="M812.4 359.6 Q814.2 354,819.2 353.4 Q825.6 352.6,827.6 361" fill="none" stroke="#dcc63e" stroke-width="1.5" stroke-linecap="round"/>
  <!-- cheeks -->
  <ellipse cx="784.8" cy="378.6" rx="4.7" ry="3.3" fill="#fbefbd"/>
  <ellipse cx="831" cy="378.6" rx="4.7" ry="3.3" fill="#fbefbd"/>
  <!-- nose + smile -->
  <path d="M807.4 374.4 Q808.2 375.4,809 374.4" fill="none" stroke="#e3cd4a" stroke-width="0.8"/>
  <path d="M794.8 381 Q806.6 393,820.6 379.6" fill="none" stroke="#2c3550" stroke-width="1.35" stroke-linecap="round"/>
  <path d="M794 382.2 L795.8 380.2 M819.6 379 L821.6 380.6" fill="none" stroke="#2c3550" stroke-width="0.9" stroke-linecap="round"/>
</g>

<text transform="translate(45.43 21.90) scale(1.0338 1.098)" font-size="12.97" fill="#1f1f1f" stroke="#1f1f1f" stroke-width="0.2">Lemoney</text>
<text transform="translate(104.11 21.90) scale(1.0528 1.098)" font-size="12.97" fill="#1f1f1f" stroke="#1f1f1f" stroke-width="0.2">Learning</text>
<text transform="translate(159.04 21.90) scale(1.0078 1.098)" font-size="12.97" fill="#1f1f1f" stroke="#1f1f1f" stroke-width="0.2">Texas</text>
<text transform="translate(197.65 21.90) scale(0.8249 1.098)" font-size="12.97" fill="#1f1f1f" stroke="#1f1f1f" stroke-width="0.2">113.76</text>
<text transform="translate(233.84 21.90) scale(1.0191 1.098)" font-size="12.97" fill="#1f1f1f" stroke="#1f1f1f" stroke-width="0.2">Personal</text>
<text transform="translate(287.94 21.90) scale(1.0225 1.098)" font-size="12.97" fill="#1f1f1f" stroke="#1f1f1f" stroke-width="0.2">Financial</text>
<text transform="translate(343.42 21.90) scale(1.0364 1.098)" font-size="12.97" fill="#1f1f1f" stroke="#1f1f1f" stroke-width="0.2">Literacy</text>
<text transform="translate(394.64 21.90) scale(1.0786 1.098)" font-size="12.97" fill="#1f1f1f" stroke="#1f1f1f" stroke-width="0.2">and</text>
<text transform="translate(420.41 21.90) scale(1.0496 1.098)" font-size="12.97" fill="#1f1f1f" stroke="#1f1f1f" stroke-width="0.2">Economics_Instructi...</text>
<text transform="translate(46.27 40.80) scale(1.0105 1.098)" font-size="10.33" fill="#1f1f1f" stroke="#1f1f1f" stroke-width="0.15">File</text>
<text transform="translate(74.93 40.80) scale(1.0537 1.098)" font-size="10.33" fill="#1f1f1f" stroke="#1f1f1f" stroke-width="0.15">Edit</text>
<text transform="translate(106.70 40.80) scale(0.9563 1.098)" font-size="10.33" fill="#1f1f1f" stroke="#1f1f1f" stroke-width="0.15">View</text>
<text transform="translate(140.18 40.80) scale(1.0997 1.098)" font-size="10.33" fill="#1f1f1f" stroke="#1f1f1f" stroke-width="0.15">Insert</text>
<text transform="translate(180.84 40.80) scale(1.0377 1.098)" font-size="10.33" fill="#1f1f1f" stroke="#1f1f1f" stroke-width="0.15">Format</text>
<text transform="translate(227.07 40.80) scale(1.0508 1.098)" font-size="10.33" fill="#1f1f1f" stroke="#1f1f1f" stroke-width="0.15">Slide</text>
<text transform="translate(263.80 40.80) scale(1.0506 1.098)" font-size="10.33" fill="#1f1f1f" stroke="#1f1f1f" stroke-width="0.15">Arrange</text>
<text transform="translate(314.78 40.80) scale(1.0556 1.098)" font-size="10.33" fill="#1f1f1f" stroke="#1f1f1f" stroke-width="0.15">Tools</text>
<text transform="translate(351.39 40.80) scale(1.0980 1.098)" font-size="10.33" fill="#1f1f1f" stroke="#1f1f1f" stroke-width="0.15">Help</text>
<text transform="translate(207.52 73.00) scale(1.0329 1.098)" font-size="10.59" fill="#444746" stroke="#444746" stroke-width="0.15">Fit</text>
<text transform="translate(441.20 73.00) scale(1.0658 1.098)" font-size="10.59" fill="#444746" stroke="#444746" stroke-width="0.15">Background</text>
<text transform="translate(518.82 73.00) scale(1.0397 1.098)" font-size="10.59" fill="#444746" stroke="#444746" stroke-width="0.15">Layout</text>
<text transform="translate(571.09 73.00) scale(1.0104 1.098)" font-size="10.59" fill="#444746" stroke="#444746" stroke-width="0.15">Theme</text>
<text transform="translate(624.78 73.00) scale(1.0552 1.098)" font-size="10.59" fill="#444746" stroke="#444746" stroke-width="0.15">Transition</text>
<text transform="translate(568.94 21.00) scale(1.0278 1.098)" font-size="9.13" fill="#2a2206" font-weight="700">.PPTX</text>
<text transform="translate(845.05 28.30) scale(0.9477 1.098)" font-size="11.91" fill="#1f1f1f" stroke="#1f1f1f" stroke-width="0.15">Slideshow</text>
<text transform="translate(973.96 28.30) scale(0.9163 1.098)" font-size="11.91" fill="#001d35" stroke="#001d35" stroke-width="0.5">Share</text>
<text transform="translate(188.06 543.60) scale(0.9486 1.098)" font-size="11.38" fill="#1f1f1f" stroke="#1f1f1f" stroke-width="0.12">Click to add speaker notes</text>
<text transform="translate(373.76 191.30) scale(0.9663 1.098)" font-size="19.72" fill="#ffffff" font-weight="700">Lemoney</text>
<text transform="translate(463.28 191.30) scale(0.9468 1.098)" font-size="19.72" fill="#ffffff" font-weight="700">Learning</text>
<text transform="translate(545.83 191.30) scale(0.9859 1.098)" font-size="19.72" fill="#ffffff" font-weight="700">Instructional</text>
<text transform="translate(373.69 219.90) scale(1.0448 1.098)" font-size="19.33" fill="#ffffff" font-weight="700">Materials</text>
<text transform="translate(374.57 248.00) scale(0.9197 1.098)" font-size="17.74" fill="#ffffff">Texas</text>
<text transform="translate(421.33 248.00) scale(1.0224 1.098)" font-size="17.74" fill="#ffffff">113.76</text>
<text transform="translate(480.31 248.00) scale(0.9809 1.098)" font-size="17.74" fill="#ffffff">Personal</text>
<text transform="translate(552.48 248.00) scale(1.0005 1.098)" font-size="17.74" fill="#ffffff">Financial</text>
<text transform="translate(373.50 273.90) scale(0.9837 1.098)" font-size="17.74" fill="#ffffff">Literacy</text>
<text transform="translate(439.76 273.90) scale(1.0398 1.098)" font-size="17.74" fill="#ffffff">and</text>
<text transform="translate(474.93 273.90) scale(0.9670 1.098)" font-size="17.74" fill="#ffffff">Economics</text>
<text transform="translate(11.37 144.80) scale(1.0298 1.098)" font-size="10.59" fill="#202124" stroke="#202124" stroke-width="0.35">39</text>
<text transform="translate(11.49 228.70) scale(1.0103 1.098)" font-size="10.59" fill="#202124" stroke="#202124" stroke-width="0.35">40</text>
<text transform="translate(11.48 312.50) scale(1.0200 1.098)" font-size="10.59" fill="#202124" stroke="#202124" stroke-width="0.35">41</text>
<text transform="translate(11.48 396.20) scale(1.0200 1.098)" font-size="10.59" fill="#202124" stroke="#202124" stroke-width="0.35">42</text>
<text transform="translate(11.49 480.00) scale(1.0103 1.098)" font-size="10.59" fill="#202124" stroke="#202124" stroke-width="0.35">43</text>
</svg>
</div>
</body>
</html>
